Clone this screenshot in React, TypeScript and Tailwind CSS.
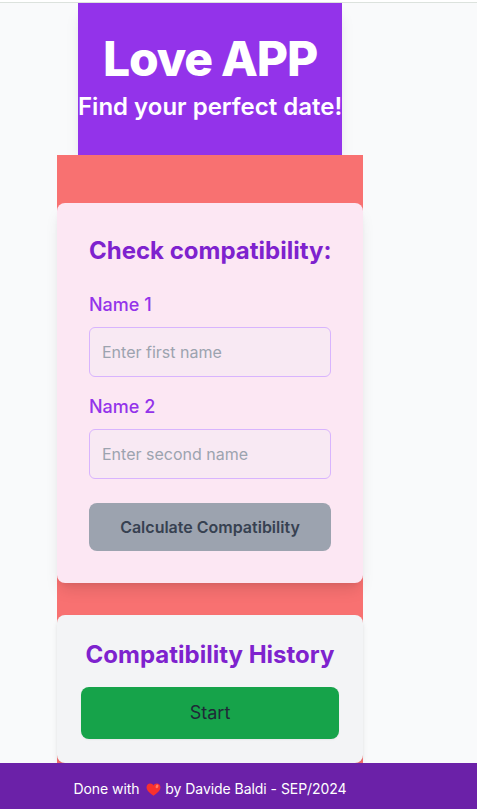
import React from "react";

function Heart() {
  return (
    <svg viewBox="0 0 16 14" className="ml-[3px] inline-block h-[13px] w-[15px] align-[-2px]" aria-hidden="true">
      <path
        d="M8 13.8C5.600 12.100.5 8.800.5 4.700.5 2.200 2.300.5 4.400.5 6.100.5 7.400 1.500 8 2.800 8.600 1.500 9.900.5 11.600.5c2.100 0 3.900 1.700 3.900 4.200 0 4.100-5.100 7.400-7.500 9.100Z"
        fill="#f8312f"
      />
      <ellipse cx="11.800" cy="3.600" rx="1.400" ry="2" transform="rotate(28 11.8 3.6)" fill="#ff7a68" />
    </svg>
  );
}

function NameField({ id, label, placeholder }: { id: string; label: string; placeholder: string }) {
  return (
    <div className="mb-4 flex flex-col">
      <label htmlFor={id} className="mb-2 text-lg font-medium text-[#9333ea]">
        {label}
      </label>
      <input
        id={id}
        type="text"
        size={1}
        placeholder={placeholder}
        className="h-[50px] w-full rounded-md border border-[#d8b4fe] bg-[#f8e9f3] p-3 text-base outline-none placeholder:text-[#9ca3af]"
      />
    </div>
  );
}

export default function App() {
  return (
    <div className="h-[809px] overflow-hidden bg-[#f9fafb] font-['Inter',sans-serif] text-[#1f2937]">
      <div className="h-[3px] border-b border-[#dce2dd] bg-white" />
      <div className="flex w-[420px] flex-col items-center">
        <header className="w-[264px] bg-[#9333ea] py-8 text-center text-white shadow-lg">
          <h1 className="text-5xl font-extrabold tracking-tight">Love APP</h1>
          <p className="mt-2 text-2xl font-semibold whitespace-nowrap">Find your perfect date!</p>
        </header>
        <main className="relative w-[306px] bg-[#f87171] pt-12">
          <section className="rounded-lg bg-[#fce7f3] p-8 shadow-lg">
            <h2 className="mb-6 text-center text-2xl font-bold whitespace-nowrap text-[#7e22ce]">
              Check compatibility:
            </h2>
            <NameField id="name-1" label="Name 1" placeholder="Enter first name" />
            <NameField id="name-2" label="Name 2" placeholder="Enter second name" />
            <button className="mt-2 h-12 w-full rounded-lg bg-[#9ca3af] text-base font-semibold whitespace-nowrap text-[#374151]">
              Calculate Compatibility
            </button>
          </section>
          <section className="mt-8 rounded-lg bg-[#f3f4f6] p-6 shadow-md">
            <h2 className="mb-4 text-center text-2xl font-bold whitespace-nowrap text-[#7e22ce]">
              Compatibility History
            </h2>
            <button className="h-[52px] w-full rounded-lg bg-[#16a34a] text-lg text-[#1f2937] shadow-xs">Start</button>
          </section>
        </main>
      </div>
      <footer className="relative bg-[#6b21a8] py-4 text-sm text-white">
        <p className="w-[420px] text-center tracking-[-0.05px] whitespace-nowrap">
          Done with <Heart /> by Davide Baldi - SEP/2024
        </p>
      </footer>
    </div>
  );
}
